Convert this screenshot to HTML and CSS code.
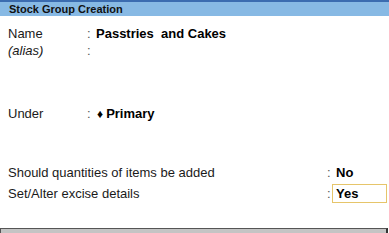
FILE: index.html
```html
<!DOCTYPE html>
<html lang="en">

<head>
    <meta charset="UTF-8">
    <title>Stock Group Creation</title>
    <link rel="stylesheet" href="styles.css">
</head>

<body>
    <div class="title-bar">Stock Group Creation</div>
    <div class="main">
        <div class="group">
            <div class="row">
                <span class="label">Name</span>
                <span class="colon">:</span>
                <span class="value">Passtries&nbsp; and Cakes</span>
            </div>
            <div class="row">
                <span class="label alias">(alias)</span>
                <span class="colon">:</span>
                <span class="value"></span>
            </div>
        </div>
        <div class="group under">
            <div class="row">
                <span class="label">Under</span>
                <span class="colon">:</span>
                <span class="value"><span class="diamond">&#9830;</span>Primary</span>
            </div>
        </div>
        <div class="group options">
            <div class="row wide">
                <span class="label">Should quantities of items be added</span>
                <span class="colon">:</span>
                <span class="value">No</span>
            </div>
            <div class="row wide">
                <span class="label">Set/Alter excise details</span>
                <span class="colon">:</span>
                <span class="value active">Yes</span>
            </div>
        </div>
    </div>
    <div class="footer"></div>
</body>

</html>
```

FILE: styles.css
```css
body {
    margin: 0;
    padding: 0;
    width: 389px;
    height: 233px;
    overflow: hidden;
    background-color: #ffffff;
    font-family: "Liberation Sans", Arial, sans-serif;
    font-size: 13px;
    color: #1a1a1a;
    display: flex;
    flex-direction: column;
}

.title-bar {
    border-top: 2px solid #3b6cb0;
    background-color: #87b9e4;
    height: 14px;
    line-height: 14px;
    padding-left: 9px;
    font-size: 11px;
    font-weight: bold;
    color: #111;
}

.main {
    flex: 1;
    padding: 9px 0 0 8px;
}

.row {
    display: grid;
    grid-template-columns: 79px 9px auto;
    height: 17px;
    line-height: 17px;
}

.row.wide {
    grid-template-columns: 319px 9px auto;
    height: 21px;
    line-height: 21px;
}

.alias {
    font-style: italic;
}

.colon {
    color: #555;
}

.value {
    font-weight: bold;
    color: #000;
}

.diamond {
    font-size: 12px;
    margin-right: 3px;
    margin-left: 1px;
}

.under {
    margin-top: 46px;
}

.options {
    margin-top: 40px;
}

.value.active {
    border: 1px solid #e6c56a;
    width: 50px;
    height: 17px;
    line-height: 17px;
    padding-left: 3px;
    margin-left: -4px;
    margin-top: 1px;
}

.footer {
    height: 4px;
    border-top: 1px solid #555;
    border-left: 1px solid #555;
    border-right: 2px solid #333;
    margin-right: 1px;
    background-color: #c4c4c4;
}
```
